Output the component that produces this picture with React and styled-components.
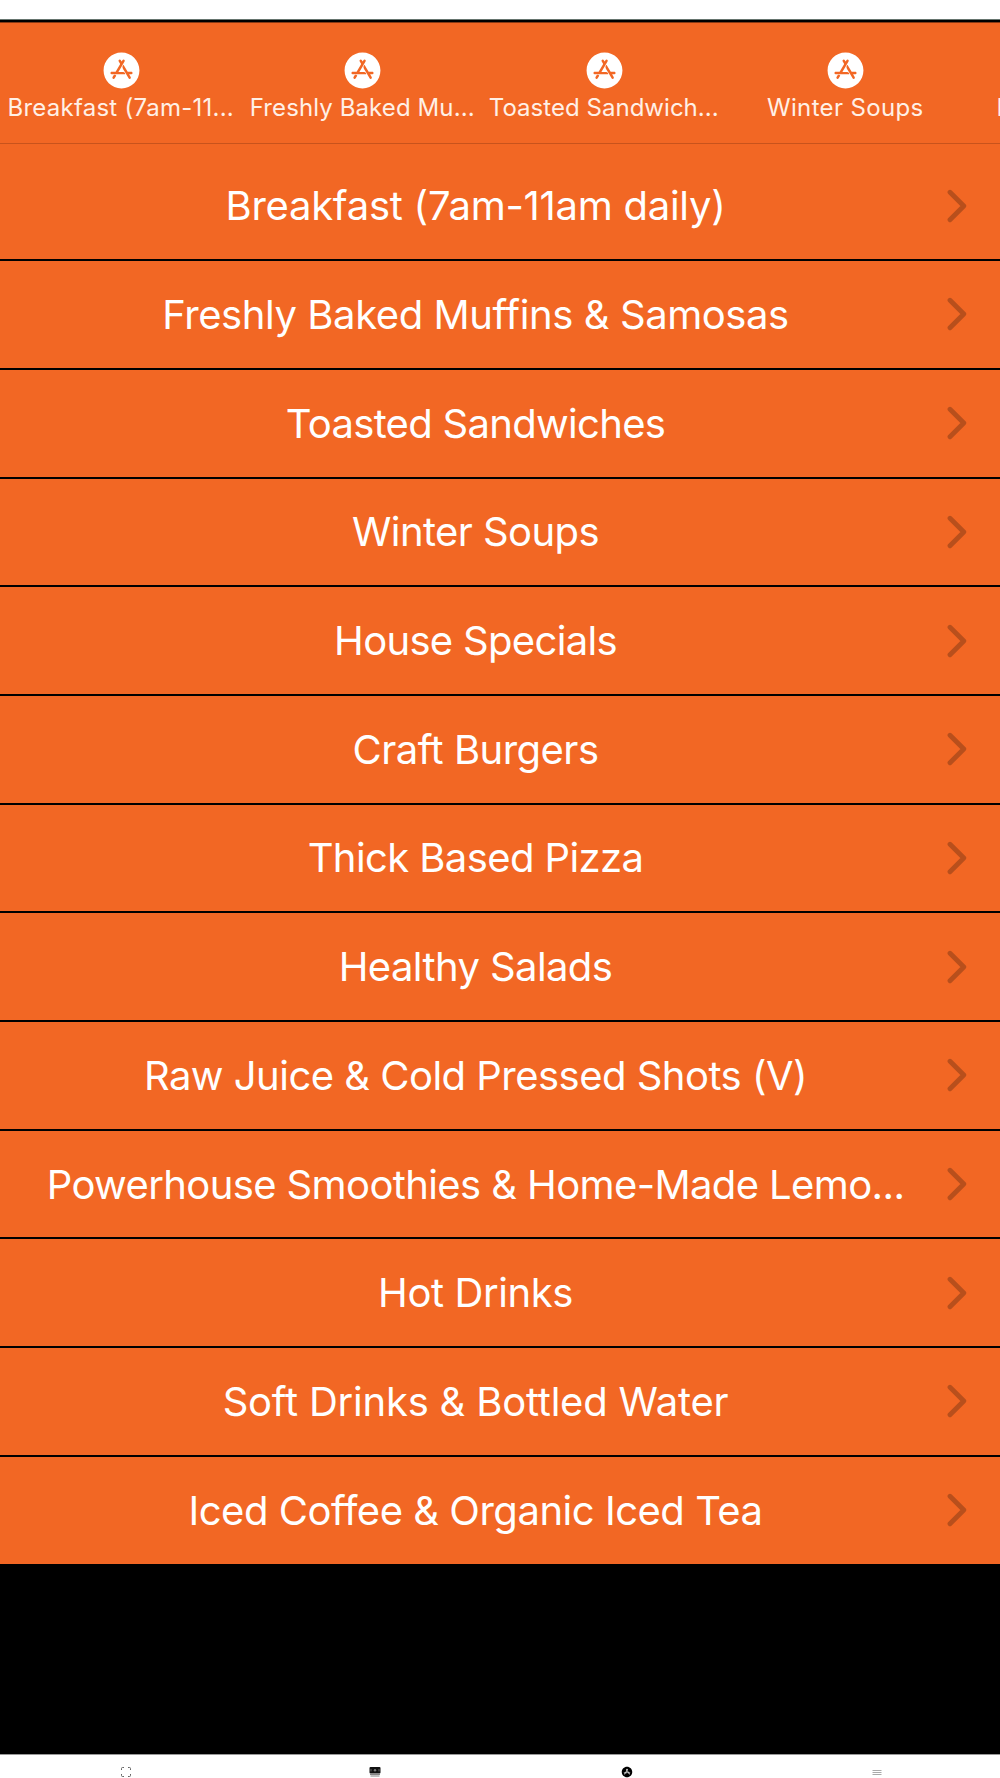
import React from 'react';
import styled, { createGlobalStyle } from 'styled-components';
import { IoLogoAppleAppstore } from 'react-icons/io5';

const GlobalStyle = createGlobalStyle`
  * {
    box-sizing: border-box;
  }
  body {
    margin: 0;
    background: #000;
    overflow: hidden;
    font-family: Inter, Roboto, sans-serif;
    font-variant-ligatures: none;
  }
`;

const Screen = styled.div`
  width: 1000px;
  height: 1778px;
  display: flex;
  flex-direction: column;
  overflow: hidden;
  background: #000;
`;

const StatusBar = styled.div`
  flex: none;
  height: 20px;
  background: #fff;
  border-bottom: 1px solid #66756f;
`;

const TabStrip = styled.nav`
  flex: none;
  display: flex;
  height: 121px;
  margin-top: 2px;
  padding-left: 0.5px;
  overflow: hidden;
  background: #f26724;
  border-top: 1px solid #8a3a14;
`;

const Tab = styled.div`
  flex: none;
  width: 241.5px;
  padding-top: 27px;
  display: flex;
  flex-direction: column;
  align-items: center;
  color: #fff;

  svg {
    display: block;
  }
`;

const TabLabel = styled.span`
  margin-top: 1px;
  padding-right: 1px;
  font-size: 24px;
  line-height: 32px;
  letter-spacing: ${props => props.$spacing}px;
  color: #fff0e6;
  white-space: nowrap;
`;

const List = styled.main`
  flex: none;
  height: 1420.5px;
  padding-top: 8.4px;
  display: grid;
  grid-template-rows: repeat(13, 108.71px);
  overflow: hidden;
  background: #f26724;
  border-top: 1px solid #c8531c;
`;

const Row = styled.div`
  display: flex;
  align-items: center;
  padding: 0 32px 0 5px;
  border-bottom: 2px solid #000;

  &:last-child {
    border-bottom-color: transparent;
  }
`;

const RowTitle = styled.span`
  flex: 1;
  padding-top: 1px;
  text-align: center;
  font-size: 40px;
  line-height: 48px;
  letter-spacing: ${props => props.$spacing}px;
  color: #fff;
  white-space: nowrap;
`;

const Chevron = styled.svg`
  flex: none;
  width: 22px;
  height: 34px;
`;

const Footer = styled.footer`
  flex: none;
  display: grid;
  grid-template-columns: 250px 250px 252px 248px;
  justify-items: center;
  height: 24px;
  margin-top: auto;
  padding: 11px 0 0 1px;
  background: #fff;
  border-top: 1px solid #999;

  svg {
    display: block;
  }
`;

const tabs = [
    { label: 'Breakfast (7am-11...', spacing: 0.25 },
    { label: 'Freshly Baked Mu...', spacing: 0.1 },
    { label: 'Toasted Sandwich...', spacing: 0.03 },
    { label: 'Winter Soups', spacing: 0.35 },
    { label: 'House Specials', spacing: 0.35 },
];

const categories = [
    { title: 'Breakfast (7am-11am daily)', spacing: -0.27 },
    { title: 'Freshly Baked Muffins & Samosas', spacing: -0.42 },
    { title: 'Toasted Sandwiches', spacing: -0.7 },
    { title: 'Winter Soups', spacing: -0.58 },
    { title: 'House Specials', spacing: -0.68 },
    { title: 'Craft Burgers', spacing: -0.52 },
    { title: 'Thick Based Pizza', spacing: -0.6 },
    { title: 'Healthy Salads', spacing: -0.6 },
    { title: 'Raw Juice & Cold Pressed Shots (V)', spacing: -0.52 },
    { title: 'Powerhouse Smoothies & Home-Made Lemo...', spacing: -0.61 },
    { title: 'Hot Drinks', spacing: -0.42 },
    { title: 'Soft Drinks & Bottled Water', spacing: -0.22 },
    { title: 'Iced Coffee & Organic Iced Tea', spacing: -0.48 },
];

const ScanIcon = () => (
    <svg width="12" height="12" viewBox="0 0 12 12" fill="none" stroke="#666" strokeWidth="1">
        <path d="M1.5 4V2.5a1 1 0 0 1 1-1H4M8 1.5h1.5a1 1 0 0 1 1 1V4M10.5 8v1.5a1 1 0 0 1-1 1H8M4 10.5H2.5a1 1 0 0 1-1-1V8" />
    </svg>
);

const CashIcon = () => (
    <svg width="14" height="12" viewBox="0 0 14 12">
        <rect x="0.5" y="1" width="11" height="6.5" rx="1" fill="#111" />
        <circle cx="6" cy="4.2" r="1.2" fill="#777" />
        <path d="M2 3v2.4M10 3v2.4" stroke="#777" strokeWidth="0.8" />
        <path d="M1 8.5h10M1.5 10h9" stroke="#777" strokeWidth="0.9" />
    </svg>
);

const MenuIcon = () => (
    <svg width="12" height="12" viewBox="0 0 12 12" stroke="#aaa" strokeWidth="1">
        <path d="M1.5 4.5h9M1.5 6.5h9M1.5 8.5h9" />
    </svg>
);

const App = () => (
    <Screen>
        <GlobalStyle />
        <StatusBar />
        <TabStrip>
            {tabs.map(tab => (
                <Tab key={tab.label}>
                    <IoLogoAppleAppstore size={41} />
                    <TabLabel $spacing={tab.spacing}>{tab.label}</TabLabel>
                </Tab>
            ))}
        </TabStrip>
        <List>
            {categories.map(category => (
                <Row key={category.title}>
                    <RowTitle $spacing={category.spacing}>{category.title}</RowTitle>
                    <Chevron viewBox="0 0 22 34" fill="none" stroke="#b84f1c" strokeWidth="4.8" strokeLinecap="round" strokeLinejoin="round">
                        <path d="M4 3.2L17.8 17L4 30.8" />
                    </Chevron>
                </Row>
            ))}
        </List>
        <Footer>
            <ScanIcon />
            <CashIcon />
            <IoLogoAppleAppstore size={12} color="#000" />
            <MenuIcon />
        </Footer>
    </Screen>
);

export default App;
